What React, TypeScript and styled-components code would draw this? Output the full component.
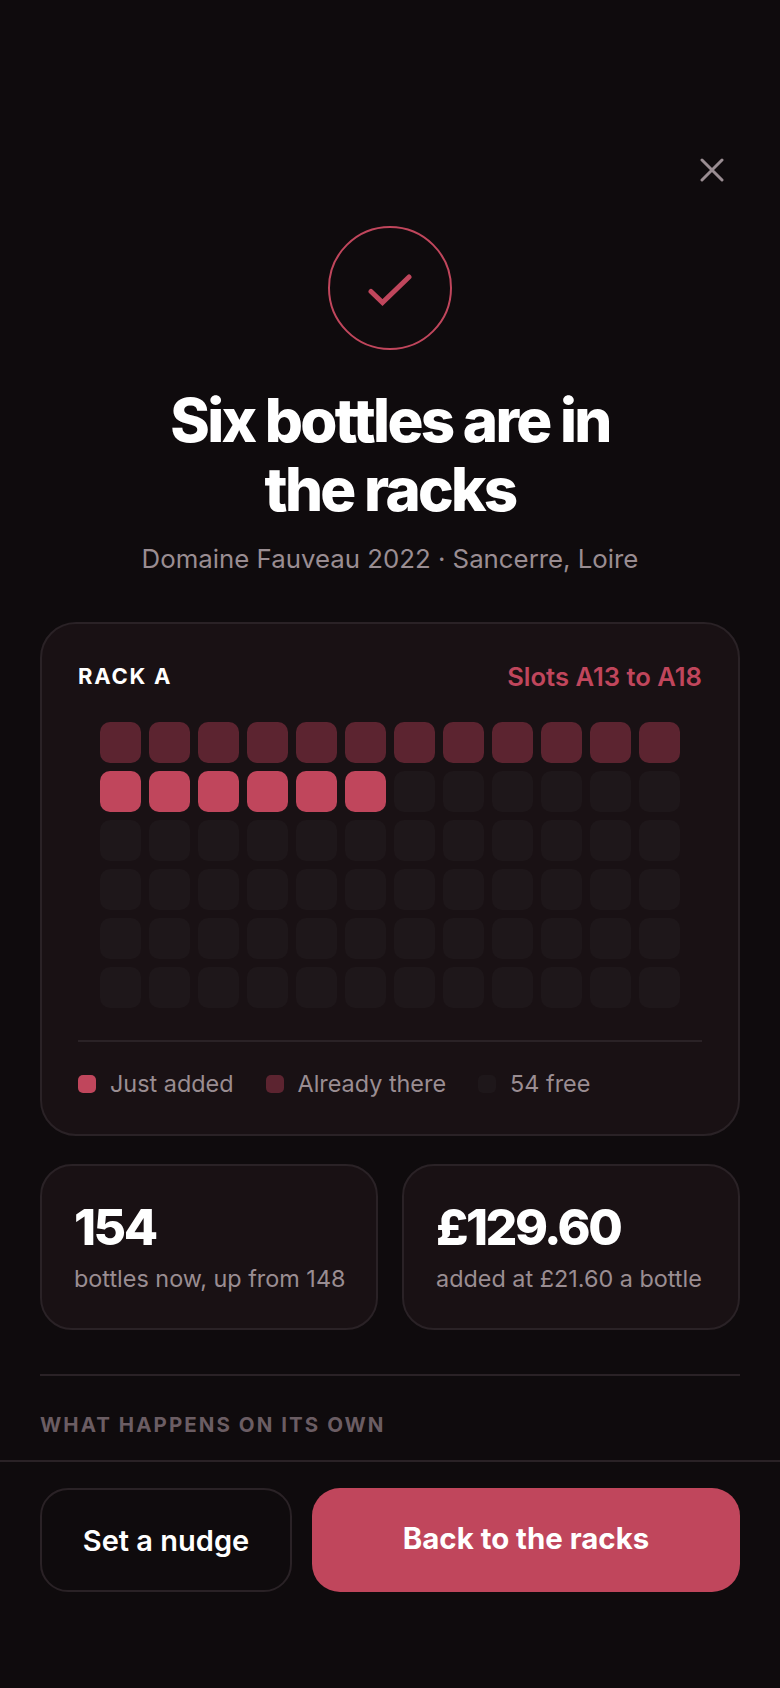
import React from "react";
import styled, { createGlobalStyle } from "styled-components";

const Rose = "#c0465c";
const RoseDim = "#5c2430";
const Empty = "#1e171a";
const Line = "#2a2226";
const Muted = "#9a8d92";

const GlobalStyle = createGlobalStyle`
  html, body {
    margin: 0;
    padding: 0;
    background: #0f0b0d;
  }
  * {
    box-sizing: border-box;
  }
`;

const Screen = styled.div`
  width: 780px;
  height: 1688px;
  display: flex;
  flex-direction: column;
  background: #0f0b0d;
  color: #fff;
  font-family: Inter, "Liberation Sans", sans-serif;
  overflow: hidden;
`;

const Scroll = styled.main`
  flex: 1;
  min-height: 0;
  overflow: hidden;
  padding: 0 40px;
  display: flex;
  flex-direction: column;
`;

const TopRow = styled.div`
  display: flex;
  justify-content: flex-end;
  padding-top: 150px;
  height: 226px;
`;

const CloseButton = styled.button`
  width: 40px;
  height: 40px;
  margin-right: 8px;
  padding: 0;
  border: 0;
  background: none;
  color: ${Muted};
  display: flex;
  align-items: center;
  justify-content: center;
`;

const Badge = styled.div`
  width: 124px;
  height: 124px;
  flex: none;
  align-self: center;
  border: 2px solid ${Rose};
  border-radius: 50%;
  display: flex;
  align-items: center;
  justify-content: center;
  color: ${Rose};

  svg {
    margin-top: 3px;
  }
`;

const Title = styled.h1`
  margin: 36px 0 0;
  font-size: 60px;
  line-height: 69px;
  font-weight: 800;
  letter-spacing: -0.045em;
  text-align: center;
`;

const Subtitle = styled.p`
  margin: 17px 0 0;
  font-size: 25.8px;
  line-height: 36px;
  color: ${Muted};
  text-align: center;
`;

const Card = styled.section`
  background: #191114;
  border: 2px solid ${Line};
`;

const RackCard = styled(Card)`
  margin-top: 45px;
  height: 514px;
  flex: none;
  border-radius: 36px;
  padding: 36px 36px 0;
`;

const RackHead = styled.div`
  display: flex;
  justify-content: space-between;
  align-items: center;
  height: 32px;
`;

const RackName = styled.span`
  font-size: 22px;
  font-weight: 700;
  letter-spacing: 0.08em;
`;

const SlotRange = styled.span`
  font-size: 25.6px;
  font-weight: 600;
  color: ${Rose};
`;

const RackGrid = styled.div`
  display: grid;
  grid-template-columns: repeat(12, 41px);
  grid-auto-rows: 41px;
  gap: 8px;
  justify-content: center;
  margin-top: 30px;
`;

const Slot = styled.div<{ $kind: "new" | "old" | "free" }>`
  border-radius: 10px;
  background: ${(p) => (p.$kind === "new" ? Rose : p.$kind === "old" ? RoseDim : Empty)};
`;

const Legend = styled.div`
  margin-top: 32px;
  padding-top: 25px;
  border-top: 2px solid ${Line};
  display: flex;
  gap: 32px;
`;

const LegendItem = styled.div`
  display: flex;
  align-items: center;
  gap: 14px;
  font-size: 23.4px;
  line-height: 34px;
  color: ${Muted};
`;

const Swatch = styled.span<{ $kind: "new" | "old" | "free" }>`
  width: 18px;
  height: 18px;
  border-radius: 5px;
  background: ${(p) => (p.$kind === "new" ? Rose : p.$kind === "old" ? RoseDim : Empty)};
`;

const StatRow = styled.div`
  display: grid;
  grid-template-columns: minmax(0, 1fr) minmax(0, 1fr);
  gap: 24px;
  margin-top: 28px;
  flex: none;
`;

const StatCard = styled(Card)`
  height: 166px;
  border-radius: 32px;
  padding: 33px 32px 0;
  white-space: nowrap;
`;

const StatValue = styled.div`
  font-size: 50px;
  line-height: 56px;
  font-weight: 800;
  letter-spacing: -0.05em;
`;

const StatLabel = styled.div`
  margin-top: 8px;
  font-size: 23.4px;
  line-height: 32px;
  color: ${Muted};
`;

const SectionRule = styled.hr`
  margin: 44px 0 0;
  border: 0;
  border-top: 2px solid ${Line};
  flex: none;
`;

const SectionLabel = styled.h2`
  margin: 35px 0 0;
  font-size: 20.5px;
  line-height: 28px;
  font-weight: 700;
  letter-spacing: 0.1em;
  color: #6b5d63;
`;

const Footer = styled.footer`
  flex: none;
  height: 228px;
  border-top: 2px solid ${Line};
  padding: 26px 40px 0;
  display: flex;
  align-items: flex-start;
  gap: 20px;
`;

const ActionButton = styled.button`
  height: 104px;
  border-radius: 28px;
  font-family: inherit;
  color: #fff;
`;

const GhostButton = styled(ActionButton)`
  width: 252px;
  background: none;
  border: 2px solid ${Line};
  font-size: 29px;
  font-weight: 600;
`;

const PrimaryButton = styled(ActionButton)`
  flex: 1;
  background: ${Rose};
  border: 0;
  padding-bottom: 4px;
  font-size: 29.4px;
  font-weight: 700;
`;

const slots = Array.from({ length: 72 }, (_, i) =>
  i < 12 ? "old" : i < 18 ? "new" : "free"
) as ("new" | "old" | "free")[];

export default function App() {
  return (
    <>
      <GlobalStyle />
      <Screen>
        <Scroll>
          <TopRow>
            <CloseButton aria-label="Close">
              <svg width="24" height="24" viewBox="0 0 24 24" fill="none" stroke="currentColor" strokeWidth="3" strokeLinecap="round">
                <path d="M2 2L22 22M22 2L2 22" />
              </svg>
            </CloseButton>
          </TopRow>
          <Badge>
            <svg width="44" height="32" viewBox="0 0 44 32" fill="none" stroke="currentColor" strokeWidth="5" strokeLinecap="round">
              <path d="M3 17.5L14.5 28.5L41 3" />
            </svg>
          </Badge>
          <Title>
            Six bottles are in
            <br />
            the racks
          </Title>
          <Subtitle>Domaine Fauveau 2022 · Sancerre, Loire</Subtitle>
          <RackCard>
            <RackHead>
              <RackName>RACK A</RackName>
              <SlotRange>Slots A13 to A18</SlotRange>
            </RackHead>
            <RackGrid>
              {slots.map((kind, i) => (
                <Slot key={i} $kind={kind} />
              ))}
            </RackGrid>
            <Legend>
              <LegendItem>
                <Swatch $kind="new" />
                Just added
              </LegendItem>
              <LegendItem>
                <Swatch $kind="old" />
                Already there
              </LegendItem>
              <LegendItem>
                <Swatch $kind="free" />
                54 free
              </LegendItem>
            </Legend>
          </RackCard>
          <StatRow>
            <StatCard>
              <StatValue>154</StatValue>
              <StatLabel>bottles now, up from 148</StatLabel>
            </StatCard>
            <StatCard>
              <StatValue>£129.60</StatValue>
              <StatLabel>added at £21.60 a bottle</StatLabel>
            </StatCard>
          </StatRow>
          <SectionRule />
          <SectionLabel>WHAT HAPPENS ON ITS OWN</SectionLabel>
        </Scroll>
        <Footer>
          <GhostButton>Set a nudge</GhostButton>
          <PrimaryButton>Back to the racks</PrimaryButton>
        </Footer>
      </Screen>
    </>
  );
}
